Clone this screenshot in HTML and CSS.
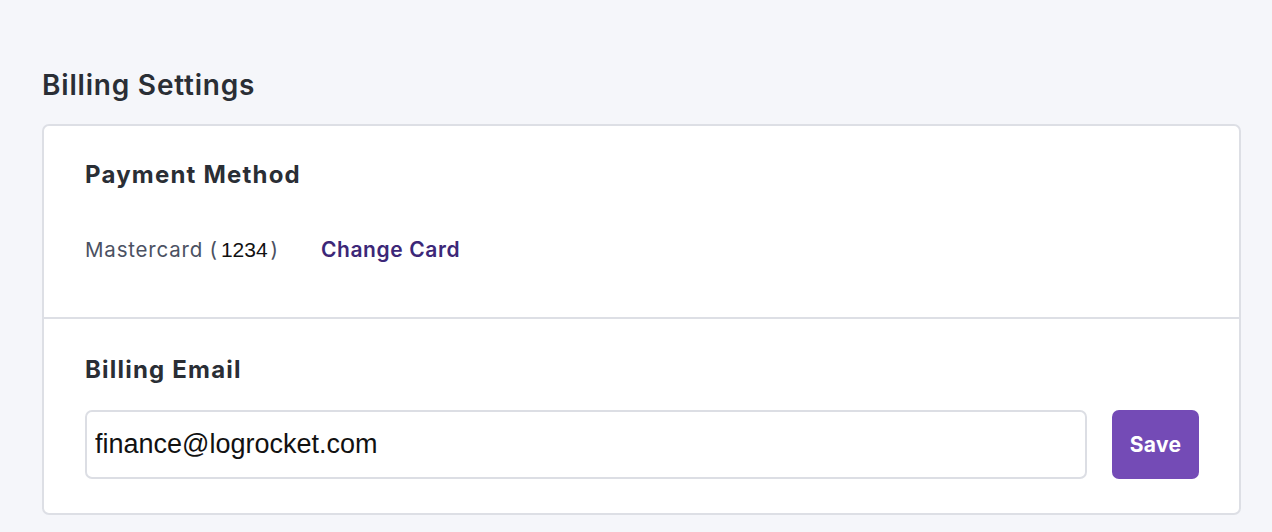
FILE: index.html
```html
<!DOCTYPE html>
<html>
<head>
<meta charset="utf-8">
<link rel="stylesheet" href="styles.css">
</head>
<body>
<main class="page">
  <h1 class="page-title">Billing Settings</h1>
  <section class="card">
    <div class="card-section payment">
      <h2 class="section-title">Payment Method</h2>
      <div class="card-row">
        <span class="card-name">Mastercard (<span class="card-digits">1234</span>)</span>
        <a class="change-link" href="#">Change Card</a>
      </div>
    </div>
    <div class="card-section email">
      <h2 class="section-title">Billing Email</h2>
      <div class="email-row">
        <input class="email-input" type="text" value="finance@logrocket.com">
        <button class="save-btn">Save</button>
      </div>
    </div>
  </section>
</main>
</body>
</html>
```
FILE: styles.css
```css
html, body {
  margin: 0;
  padding: 0;
  background: #f5f6fa;
}
body {
  font-family: Inter, "Open Sans", sans-serif;
  color: #2a2e35;
}
.page {
  padding: 66px 31px 0 42px;
}
.page-title {
  margin: 0 0 20px 0;
  font-size: 28px;
  line-height: 38px;
  font-weight: 600;
  letter-spacing: 0.8px;
  color: #2a2e35;
}
.card {
  background: #fff;
  border: 2px solid #dddfe5;
  border-radius: 7px;
}
.card-section {
  padding: 0 40px 0 41px;
}
.payment {
  padding-top: 33px;
  height: 158px;
  border-bottom: 2px solid #dddfe5;
}
.section-title {
  margin: 0;
  font-size: 24px;
  line-height: 32px;
  font-weight: 700;
  letter-spacing: 1.2px;
  color: #2a2e35;
}
.card-row {
  display: flex;
  align-items: center;
  gap: 42px;
  margin-top: 45px;
  line-height: 28px;
}
.card-name {
  font-size: 20.5px;
  letter-spacing: 0.8px;
  color: #4b5162;
}
.card-digits {
  font-family: "Liberation Sans", Arial, sans-serif;
  font-size: 21px;
  letter-spacing: 0;
  color: #111;
  padding: 0 3px;
}
.change-link {
  font-size: 21px;
  font-weight: 600;
  letter-spacing: 0.6px;
  color: #3c2778;
  text-decoration: none;
}
.email {
  padding-top: 35px;
  padding-bottom: 34px;
}
.email-row {
  display: flex;
  gap: 25px;
  margin-top: 24px;
}
.email-input {
  flex: 1;
  height: 69px;
  box-sizing: border-box;
  border: 2px solid #dcdee4;
  border-radius: 7px;
  padding: 0 8px;
  font-family: "Liberation Sans", Arial, sans-serif;
  font-size: 27px;
  color: #111;
  outline: none;
}
.save-btn {
  width: 87px;
  height: 69px;
  border: none;
  border-radius: 7px;
  background: #744bb6;
  color: #fff;
  font-family: Inter, sans-serif;
  font-size: 21px;
  font-weight: 700;
  letter-spacing: 0.3px;
}
```
